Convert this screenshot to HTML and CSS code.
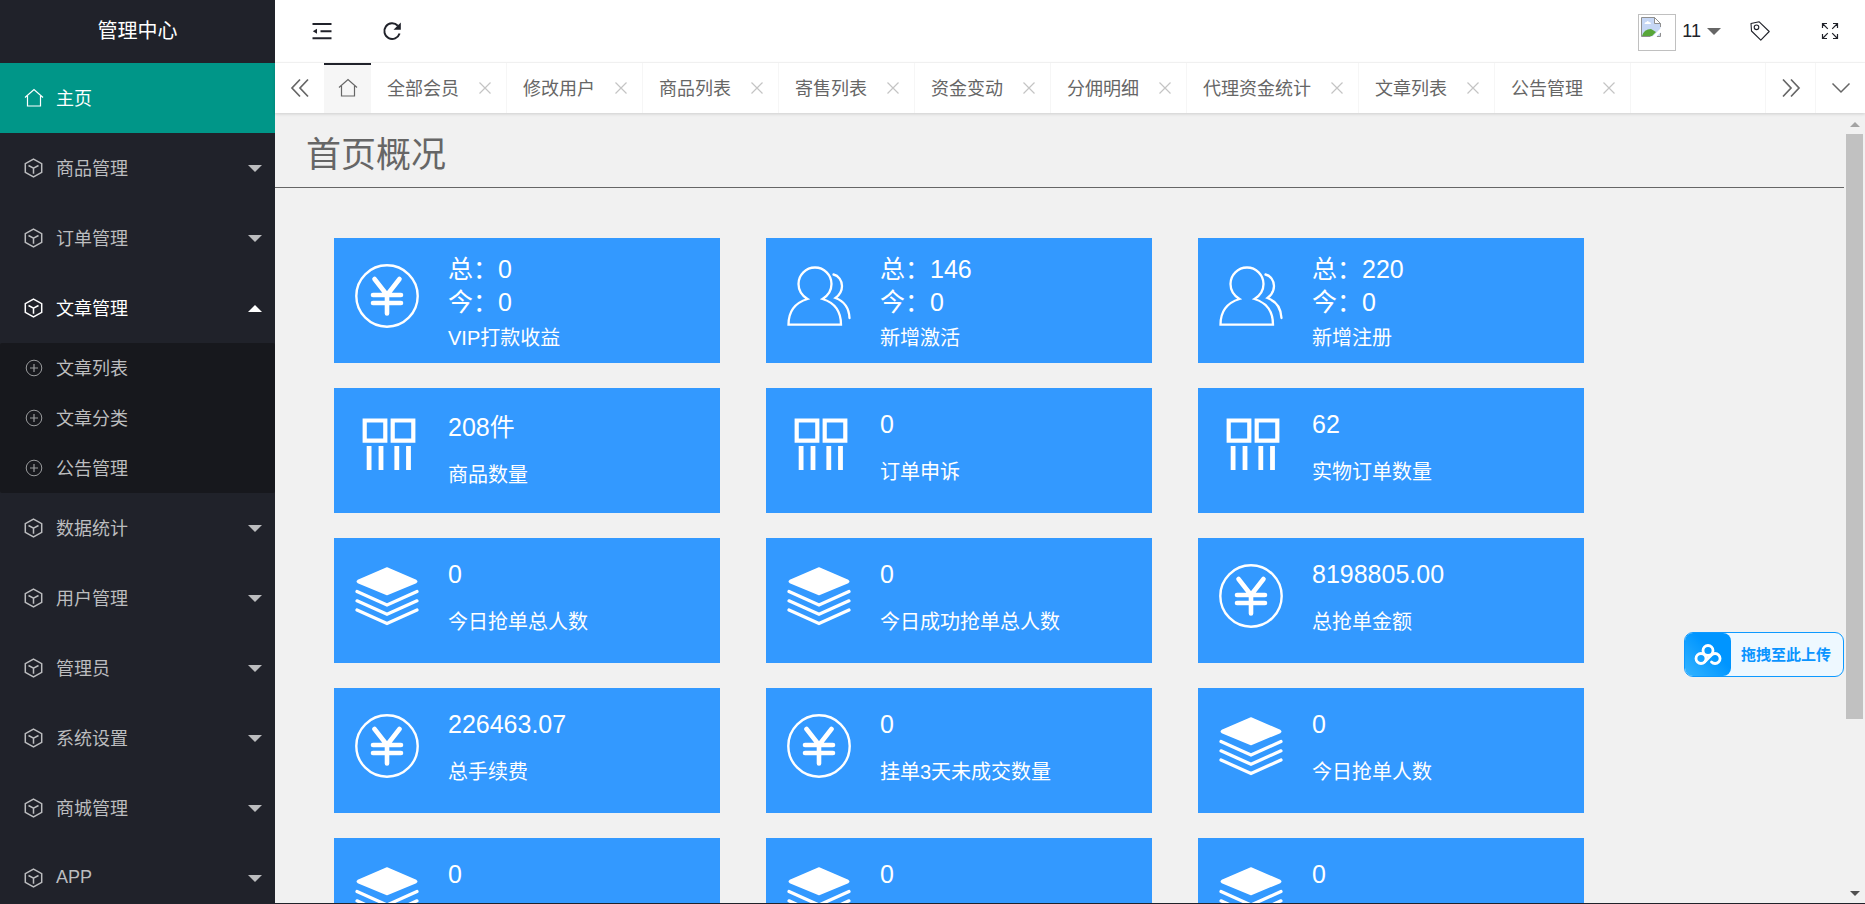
FILE: index.html
```
<!DOCTYPE html>
<html lang="zh-CN">
<head>
<meta charset="utf-8">
<title>管理中心</title>
<link rel="stylesheet" href="styles.css">
</head>
<body>
<svg class="sprite" aria-hidden="true">
  <symbol id="i-home" viewBox="0 0 20 20"><path d="M1 9.5 10 1.5l9 8M3.5 8v10h13V8" fill="none" stroke="currentColor" stroke-width="1.2"/></symbol>
  <symbol id="i-cube" viewBox="0 0 20 20"><path d="M9.500 1.200 17.700 5.700v8.600L9.500 18.800l-8.200-4.500V5.700ZM4.500 7.500l5 2.700 5-2.700M9.500 10.200V15.800" fill="none" stroke="currentColor" stroke-width="1.500"/></symbol>
  <symbol id="i-plus" viewBox="0 0 20 20"><circle cx="10" cy="10" r="7.800" fill="none" stroke="currentColor"/><path d="M10 6v8M6 10h8" fill="none" stroke="currentColor" stroke-width="1.200"/></symbol>
  <symbol id="i-down" viewBox="0 0 14 7"><path d="M0 0h14L7 7Z" fill="currentColor"/></symbol>
  <symbol id="i-up" viewBox="0 0 14 7"><path d="M0 7h14L7 0Z" fill="currentColor"/></symbol>
  <symbol id="i-close" viewBox="0 0 12 12"><path d="m.5.500 11 11M11.500.500l-11 11" fill="none" stroke="currentColor" stroke-width="1.200"/></symbol>
  <symbol id="i-yen" viewBox="0 0 64 64"><circle cx="32" cy="32" r="30.700" fill="none" stroke="currentColor" stroke-width="2.400"/><path d="M19.500 15 32 31 44.500 15M18 31h28M18 39h28M32 31v18.500" fill="none" stroke="currentColor" stroke-width="4.600" stroke-linecap="round" stroke-linejoin="round"/></symbol>
  <symbol id="i-users" viewBox="0 0 64 64"><path d="M20.500 35C14 31 11.500 26 11.500 20a16.500 16.500 0 0 1 33 0c0 6-2.500 11-9 15C47 38.500 54 47 54 60.700H1.500C1.500 47 9 38.500 20.500 35ZM46.500 10.500c5 1 8.500 6 8.500 11.500 0 5-2.500 9-6.500 12 8 3 13.500 10 14 20" fill="none" stroke="currentColor" stroke-width="2.300" stroke-linecap="round" stroke-linejoin="miter"/></symbol>
  <symbol id="i-goods" viewBox="0 0 64 64"><path d="M9.700 6.500h20.600v20.200H9.700ZM37.700 6.500h20.600v20.200H37.700Z" fill="none" stroke="currentColor" stroke-width="4.200"/><path d="M14.100 32v24M26 32v24M41.800 32v24M53.500 32v24" fill="none" stroke="currentColor" stroke-width="4.800"/></symbol>
  <symbol id="i-layers" viewBox="0 0 64 64"><path d="M32 4 61 16.500Q62.500 17.500 61 18.500L32 30.500 3 18.500Q1.500 17.500 3 16.500Z" fill="currentColor" stroke="currentColor" stroke-width="1.500" stroke-linejoin="round"/><path d="M2 27.500l30 13.500 30-13.500M2 36.800l30 13.500 30-13.500M2 46l30 13.500 30-13.500" fill="none" stroke="currentColor" stroke-width="3.200" stroke-linecap="round"/></symbol>
</svg>

<div class="app">
  <nav class="side">
    <h1 class="logo">管理中心</h1>
    <a class="item current" href="#"><svg class="ico"><use href="#i-home"/></svg><span>主页</span></a>
    <a class="item" href="#"><svg class="ico"><use href="#i-cube"/></svg><span>商品管理</span><svg class="caret"><use href="#i-down"/></svg></a>
    <a class="item" href="#"><svg class="ico"><use href="#i-cube"/></svg><span>订单管理</span><svg class="caret"><use href="#i-down"/></svg></a>
    <a class="item open" href="#"><svg class="ico"><use href="#i-cube"/></svg><span>文章管理</span><svg class="caret"><use href="#i-up"/></svg></a>
    <div class="sub">
      <a class="item" href="#"><svg class="ico"><use href="#i-plus"/></svg><span>文章列表</span></a>
      <a class="item" href="#"><svg class="ico"><use href="#i-plus"/></svg><span>文章分类</span></a>
      <a class="item" href="#"><svg class="ico"><use href="#i-plus"/></svg><span>公告管理</span></a>
    </div>
    <a class="item" href="#"><svg class="ico"><use href="#i-cube"/></svg><span>数据统计</span><svg class="caret"><use href="#i-down"/></svg></a>
    <a class="item" href="#"><svg class="ico"><use href="#i-cube"/></svg><span>用户管理</span><svg class="caret"><use href="#i-down"/></svg></a>
    <a class="item" href="#"><svg class="ico"><use href="#i-cube"/></svg><span>管理员</span><svg class="caret"><use href="#i-down"/></svg></a>
    <a class="item" href="#"><svg class="ico"><use href="#i-cube"/></svg><span>系统设置</span><svg class="caret"><use href="#i-down"/></svg></a>
    <a class="item" href="#"><svg class="ico"><use href="#i-cube"/></svg><span>商城管理</span><svg class="caret"><use href="#i-down"/></svg></a>
    <a class="item" href="#"><svg class="ico"><use href="#i-cube"/></svg><span>APP</span><svg class="caret"><use href="#i-down"/></svg></a>
  </nav>

  <div class="main">
    <header class="top">
      <button class="tool" aria-label="收起菜单"><svg class="ico" viewBox="0 0 20 20"><path d="M.500 3h19M8.500 10.200h11M.500 17.300h19" fill="none" stroke="currentColor" stroke-width="2"/><path d="M.800 10.200 5 7.700v5Z" fill="currentColor"/></svg></button>
      <button class="tool" aria-label="刷新"><svg class="ico" viewBox="0 0 20 20"><path d="M17.600 12.500A7.800 7.800 0 1 1 15.800 4.700" fill="none" stroke="currentColor" stroke-width="2"/><path d="M18.800 1.500v7.300h-7.300Z" fill="currentColor"/></svg></button>
      <div class="spacer"></div>
      <button class="user">
        <span class="avatar"><svg viewBox="0 0 20 20"><path d="M.500.500h13l6 6v13H.500Z" fill="#c6d7f5"/><path d="M1 19q2-7 9-7l5 3-4 4Z" fill="#57a639"/><path d="M3.500 7q0-2 2-2 1-2 2.500 0 2 0 2 2Z" fill="#fff"/><path d="m11 20 9-9v4l-5 5Z" fill="#fff"/><path d="M9.500 19.500H.500V.500h13l6 6V10M19.500 16v3.500H16" fill="none" stroke="#8f8f8f"/><path d="M13.500.500v6h6Z" fill="#fff" stroke="#8f8f8f"/></svg></span>
        <span>11</span>
        <svg class="caret"><use href="#i-down"/></svg>
      </button>
      <button class="tool" aria-label="便签"><svg class="ico" viewBox="0 0 20 20"><path d="M1 2.500 9.200.800l10 9.700-8.400 8.700L1.500 10Z" fill="none" stroke="currentColor" stroke-width="1.100" stroke-linejoin="round"/><circle cx="6.500" cy="6.300" r="2.300" fill="none" stroke="currentColor" stroke-width="1.100"/></svg></button>
      <button class="tool" aria-label="全屏"><svg class="ico" viewBox="0 0 20 20"><path d="M7.800 7.800 3 3M2.500 7V2.500H7M12.200 7.800 17 3M13 2.500h4.500V7M7.800 12.200 3 17M2.500 13v4.500H7M12.200 12.200 17 17M17.500 13v4.500H13" fill="none" stroke="currentColor" stroke-width="1.200"/></svg></button>
    </header>

    <div class="tabs">
      <button class="ctl" aria-label="向左"><svg class="ico" viewBox="0 0 20 20"><path d="M10 1.500 2 10l8 8.500M18 1.500 10 10l8 8.500" fill="none" stroke="currentColor" stroke-width="1.700"/></svg></button>
      <a class="hometab" href="#" aria-label="主页"><svg class="ico"><use href="#i-home"/></svg></a>
      <div class="tab"><a href="#">全部会员</a><button aria-label="关闭"><svg><use href="#i-close"/></svg></button></div>
      <div class="tab"><a href="#">修改用户</a><button aria-label="关闭"><svg><use href="#i-close"/></svg></button></div>
      <div class="tab"><a href="#">商品列表</a><button aria-label="关闭"><svg><use href="#i-close"/></svg></button></div>
      <div class="tab"><a href="#">寄售列表</a><button aria-label="关闭"><svg><use href="#i-close"/></svg></button></div>
      <div class="tab"><a href="#">资金变动</a><button aria-label="关闭"><svg><use href="#i-close"/></svg></button></div>
      <div class="tab"><a href="#">分佣明细</a><button aria-label="关闭"><svg><use href="#i-close"/></svg></button></div>
      <div class="tab"><a href="#">代理资金统计</a><button aria-label="关闭"><svg><use href="#i-close"/></svg></button></div>
      <div class="tab"><a href="#">文章列表</a><button aria-label="关闭"><svg><use href="#i-close"/></svg></button></div>
      <div class="tab"><a href="#">公告管理</a><button aria-label="关闭"><svg><use href="#i-close"/></svg></button></div>
      <div class="spacer"></div>
      <button class="ctl line" aria-label="向右"><svg class="ico" viewBox="0 0 20 20"><path d="m2 1.500 8 8.500-8 8.500M10 1.500l8 8.500-8 8.500" fill="none" stroke="currentColor" stroke-width="1.700"/></svg></button>
      <button class="ctl line" aria-label="更多"><svg class="ico" viewBox="0 0 20 20"><path d="m1.500 5.500 8.500 8.500 8.500-8.500" fill="none" stroke="currentColor" stroke-width="1.500"/></svg></button>
    </div>

    <div class="body">
      <main class="page">
        <h2 class="title">首页概况</h2>
        <div class="grid">
          <section class="card double"><svg><use href="#i-yen"/></svg><div><p class="num">总：0<br>今：0</p><p class="lab">VIP打款收益</p></div></section>
          <section class="card double"><svg><use href="#i-users"/></svg><div><p class="num">总：146<br>今：0</p><p class="lab">新增激活</p></div></section>
          <section class="card double"><svg><use href="#i-users"/></svg><div><p class="num">总：220<br>今：0</p><p class="lab">新增注册</p></div></section>

          <section class="card unit"><svg><use href="#i-goods"/></svg><div><p class="num">208件</p><p class="lab">商品数量</p></div></section>
          <section class="card"><svg><use href="#i-goods"/></svg><div><p class="num">0</p><p class="lab">订单申诉</p></div></section>
          <section class="card"><svg><use href="#i-goods"/></svg><div><p class="num">62</p><p class="lab">实物订单数量</p></div></section>

          <section class="card"><svg><use href="#i-layers"/></svg><div><p class="num">0</p><p class="lab">今日抢单总人数</p></div></section>
          <section class="card"><svg><use href="#i-layers"/></svg><div><p class="num">0</p><p class="lab">今日成功抢单总人数</p></div></section>
          <section class="card"><svg><use href="#i-yen"/></svg><div><p class="num">8198805.00</p><p class="lab">总抢单金额</p></div></section>

          <section class="card"><svg><use href="#i-yen"/></svg><div><p class="num">226463.07</p><p class="lab">总手续费</p></div></section>
          <section class="card"><svg><use href="#i-yen"/></svg><div><p class="num">0</p><p class="lab">挂单3天未成交数量</p></div></section>
          <section class="card"><svg><use href="#i-layers"/></svg><div><p class="num">0</p><p class="lab">今日抢单人数</p></div></section>

          <section class="card"><svg><use href="#i-layers"/></svg><div><p class="num">0</p></div></section>
          <section class="card"><svg><use href="#i-layers"/></svg><div><p class="num">0</p></div></section>
          <section class="card"><svg><use href="#i-layers"/></svg><div><p class="num">0</p></div></section>
        </div>
      </main>
      <div class="scroll" aria-hidden="true">
        <svg class="arrow" viewBox="0 0 10 5"><path d="M0 5h10L5 0Z" fill="#a3a3a3"/></svg>
        <div class="track"><div class="thumb"></div></div>
        <svg class="arrow" viewBox="0 0 10 5"><path d="M0 0h10L5 5Z" fill="#505050"/></svg>
      </div>
    </div>
  </div>
</div>

<button class="upload">
  <span class="cloud"><svg viewBox="0 0 28 22"><g fill="none" stroke="#fff" stroke-width="2.800"><circle cx="14" cy="6.500" r="5"/><circle cx="7" cy="14.500" r="5"/><path d="M10.500 18 17.500 11A5 5 0 1 1 17.500 18" stroke-linecap="round"/></g></svg></span>
  <span class="uptext">拖拽至此上传</span>
</button>
</body>
</html>
```
FILE: styles.css
```
* { box-sizing: border-box; }
body, h1, h2, p { margin: 0; font-weight: 400; }
body {
  font-family: "Liberation Sans", "Noto Sans CJK SC", sans-serif;
  font-size: 18px;
  color: #666;
  background: #f1f1f1;
  overflow: hidden;
}
a { color: inherit; text-decoration: none; }
button {
  font: inherit;
  color: inherit;
  background: none;
  border: 0;
  padding: 0;
  cursor: pointer;
}
svg { display: block; flex: none; }
.sprite { position: absolute; width: 0; height: 0; }
.ico { width: 20px; height: 20px; }
.caret { width: 14px; height: 7px; }
.spacer { flex: 1; }

.app { display: flex; height: 100vh; border-bottom: 1px solid #20222a; }

/* Sidebar */
.side { width: 275px; flex: none; background: #20222a; color: #bcbdbf; overflow: hidden; }
.logo { font-size: 20px; line-height: 63px; text-align: center; color: #fff; }
.item { display: flex; align-items: center; gap: 12px; height: 70px; padding: 0 13px 0 24px; }
.item span { padding-bottom: 2px; }
.item .caret { margin-left: auto; }
.current { background: #009688; color: #fff; }
.open { color: #fff; }
.sub { background: #17181d; border-radius: 2px; }
.sub .item { height: 50px; }
.sub .ico { color: #9a9b9d; }

/* Header */
.main { flex: 1; min-width: 0; display: flex; flex-direction: column; }
.top {
  display: flex;
  align-items: center;
  height: 63px;
  padding-left: 12px;
  background: #fff;
  color: #20222a;
  border-bottom: 1px solid #f6f6f6;
}
.tool { width: 70px; height: 62px; display: flex; align-items: center; justify-content: center; }
.user { display: flex; align-items: center; gap: 6px; padding-right: 4px; }
.user .caret { color: #666; }
.avatar { width: 38px; height: 37px; margin-top: 2px; border: 1px solid #c0c0c0; padding: 2px; }
.avatar svg { width: 20px; height: 20px; }

/* Tab strip */
.tabs {
  display: flex;
  height: 50px;
  background: #fff;
  box-shadow: 0 1px 3px rgba(0, 0, 0, .15);
  z-index: 1;
}
.ctl { width: 49px; display: flex; align-items: center; justify-content: center; }
.line { width: 50px; border-left: 1px solid #f6f6f6; }
.hometab {
  width: 47px;
  display: flex;
  align-items: center;
  justify-content: center;
  padding-bottom: 2px;
  background: #f6f6f6;
  border-top: 2px solid #20222a;
}
.tab {
  display: flex;
  align-items: center;
  gap: 20px;
  padding: 0 15px 0 16px;
  border-right: 1px solid #f6f6f6;
  white-space: nowrap;
}
.tab a { padding-bottom: 2px; }
.tab svg { width: 12px; height: 12px; color: #c4c4c4; }

/* Content */
.body { flex: 1; min-height: 0; display: flex; }
.page { flex: 1; overflow: hidden; }
.title {
  height: 75px;
  padding-left: 31px;
  font-size: 35px;
  line-height: 84px;
  border-bottom: 1px solid #666;
}
.grid {
  display: grid;
  grid-template-columns: repeat(3, 1fr);
  gap: 25px 46px;
  margin: 50px 260px 0 59px;
}
.card {
  display: flex;
  gap: 29px;
  height: 125px;
  padding: 20px 0 0 21px;
  background: #39f;
  color: #fff;
}
.card svg { width: 64px; height: 64px; margin-top: 6px; }
.num { font-size: 25px; line-height: 33px; }
.lab { font-size: 20px; line-height: 28px; margin-top: 17px; }
.double { padding-top: 15px; }
.double svg { margin-top: 11px; }
.double .lab { margin-top: 5px; }
.unit .num { margin-top: 3px; }

/* Scrollbar */
.scroll {
  width: 21px;
  display: flex;
  flex-direction: column;
  align-items: center;
  padding: 9px 0 7px;
}
.arrow { width: 10px; height: 5px; }
.track { flex: 1; width: 17px; padding: 7px 0; }
.thumb { height: 78%; background: #c1c1c1; }

/* Floating upload button */
.upload {
  position: absolute;
  right: 21px;
  top: 632px;
  display: flex;
  height: 45px;
  border: 1px solid #0d99ff;
  border-radius: 9px;
  background: #eef8ff;
  overflow: hidden;
  color: #0a94ff;
}
.cloud {
  width: 46px;
  height: 43px;
  display: flex;
  align-items: center;
  justify-content: center;
  border-radius: 0 8px 8px 0;
  background: linear-gradient(45deg, #35b4ff, #0095ff 60%);
}
.cloud svg { width: 28px; height: 22px; }
.uptext { padding: 0 12px 0 10px; font-size: 15px; font-weight: 700; line-height: 43px; }
```
